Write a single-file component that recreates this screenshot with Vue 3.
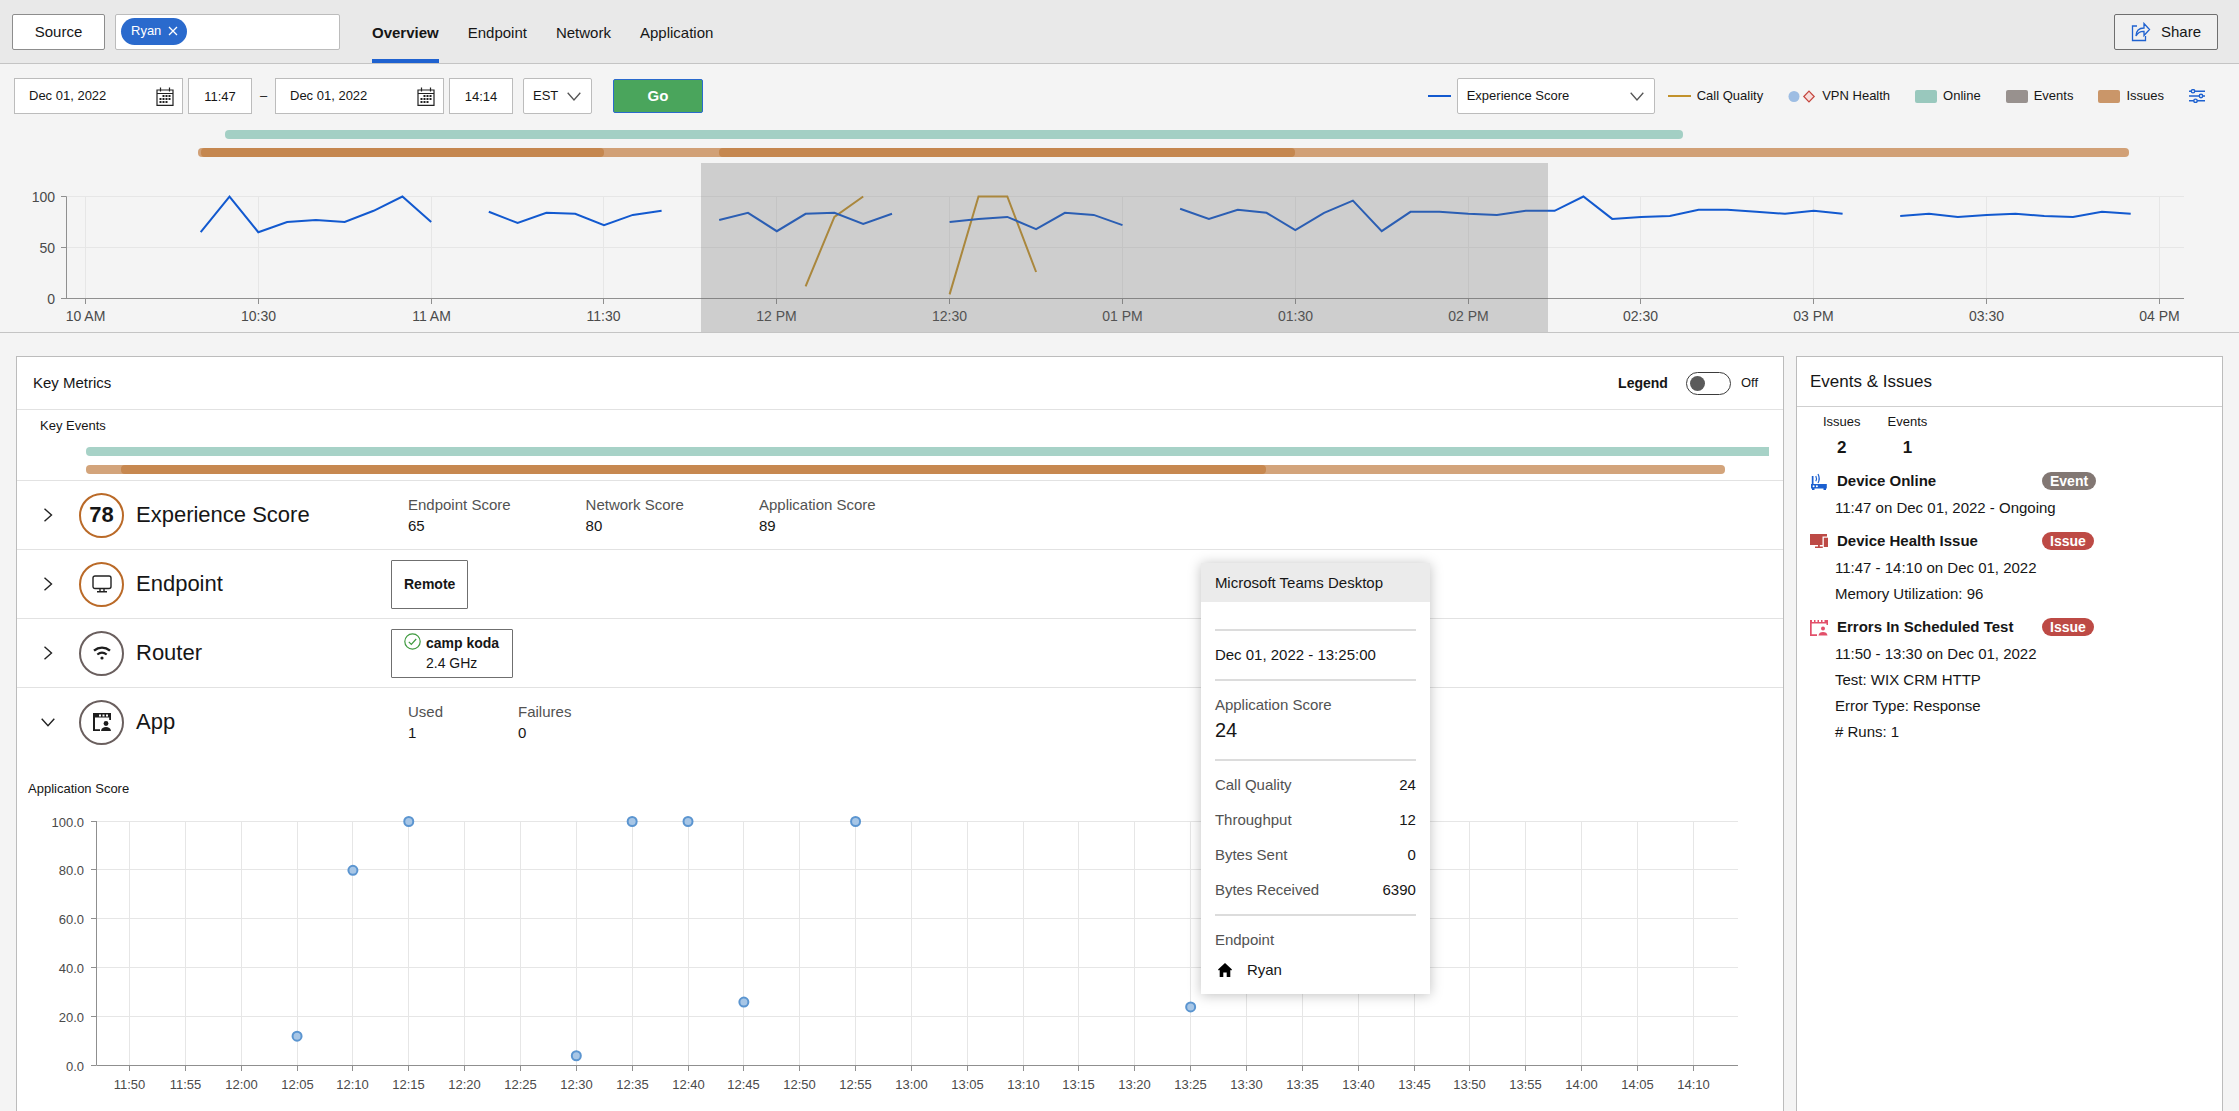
<script setup>
import { ref } from 'vue'

const tabs = ['Overview', 'Endpoint', 'Network', 'Application']
const activeTab = ref('Overview')
const search = ref('')
const startDate = ref('Dec 01, 2022')
const startTime = ref('11:47')
const endDate = ref('Dec 01, 2022')
const endTime = ref('14:14')
const zone = ref('EST')
const metric = ref('Experience Score')
const legendOn = ref(false)

// Overview timeline: minutes are counted from 10 AM
const timeX = (minute) => 85.5 + minute * 5.761
const scoreY = (value) => 178.5 - value * 1.02
const hourTicks = [
  '10 AM', '10:30', '11 AM', '11:30', '12 PM', '12:30', '01 PM',
  '01:30', '02 PM', '02:30', '03 PM', '03:30', '04 PM',
].map((label, i) => ({ label, x: Math.floor(timeX(i * 30)) + 0.5 }))

const toPoints = ({ start, values }) =>
  values.map((v, i) => `${timeX(start + i * 5).toFixed(1)},${scoreY(v).toFixed(1)}`).join(' ')

const experience = [
  { start: 20, values: [65, 100, 65, 75, 77, 75, 86, 100, 75] },
  { start: 70, values: [85, 74, 84, 83, 72, 82, 86] },
  { start: 110, values: [77, 84, 66, 83, 84, 73, 83] },
  { start: 150, values: [75, 78, 80, 68, 84, 82, 72] },
  {
    start: 190,
    values: [88, 78, 87, 84, 67, 84, 96, 66, 85, 85, 83, 82, 86, 86, 100, 78, 80, 81, 87, 87, 85, 83, 86, 83],
  },
  { start: 315, values: [81, 83, 80, 82, 83, 81, 80, 85, 83] },
].map(toPoints)

const callQuality = [
  { start: 125, values: [12, 80, 100] },
  { start: 150, values: [4, 100, 100, 26] },
].map(toPoints)

// Application score scatter: minutes are counted from 11:47
const appX = (minute) => 79 + minute * 11.17
const appY = (value) => 266.5 - value * 2.44
const appTicks = Array.from({ length: 29 }, (_, i) => {
  const total = 11 * 60 + 50 + i * 5
  const label = `${Math.floor(total / 60)}:${String(total % 60).padStart(2, '0')}`
  return { label, x: Math.floor(appX(3 + i * 5)) + 0.5 }
})
const appLevels = [100, 80, 60, 40, 20, 0]
const appPoints = [
  [18, 12], [23, 80], [28, 100], [43, 4], [48, 100], [53, 100], [58, 26], [68, 100], [98, 24],
]

const details = [
  ['Call Quality', '24'],
  ['Throughput', '12'],
  ['Bytes Sent', '0'],
  ['Bytes Received', '6390'],
]

const feed = [
  { icon: 'router', title: 'Device Online', kind: 'Event', lines: ['11:47 on Dec 01, 2022 - Ongoing'] },
  {
    icon: 'devices', title: 'Device Health Issue', kind: 'Issue',
    lines: ['11:47 - 14:10 on Dec 01, 2022', 'Memory Utilization: 96'],
  },
  {
    icon: 'test', title: 'Errors In Scheduled Test', kind: 'Issue',
    lines: ['11:50 - 13:30 on Dec 01, 2022', 'Test: WIX CRM HTTP', 'Error Type: Response', '# Runs: 1'],
  },
]
</script>

<template>
  <div class="page">
    <header class="topbar">
      <button class="source" type="button">Source</button>
      <div class="search">
        <button class="chip" type="button" aria-label="Remove Ryan">
          <span>Ryan</span>
          <svg width="10" height="10" viewBox="0 0 10 10"><path d="M1 1l8 8M9 1l-8 8" stroke="#fff" stroke-width="1.3" /></svg>
        </button>
        <input v-model="search" type="text" aria-label="Add source" />
      </div>
      <nav class="tabs">
        <a
          v-for="tab in tabs"
          :key="tab"
          href="#"
          :class="{ active: tab === activeTab }"
          @click.prevent="activeTab = tab"
        >{{ tab }}</a>
      </nav>
      <button class="share" type="button">
        <svg width="20" height="20" viewBox="0 0 20 20" fill="none" stroke="#1f62d0" stroke-width="1.3">
          <path d="M6 4H1.500v14.500h13V14" />
          <path d="M5 14c.2-5.500 2.500-8 8-8V1.500l5.500 6-5.500 6V9.300c-4-.2-6.200 1.300-8 4.700z" />
        </svg>
        <span>Share</span>
      </button>
    </header>

    <section class="overview">
      <div class="toolbar">
        <div class="date">
          <input v-model="startDate" type="text" aria-label="Start date" />
          <svg class="calendar" width="18" height="19" viewBox="0 0 18 19">
            <path d="M1 3h16v15.300H1zM1 6.500h16M4.500.5v4M13.500.5v4" fill="none" stroke="#222" stroke-width="1.200" />
            <path d="M6.500 9h8M3.500 12h11M3.500 15h8" stroke="#222" stroke-width="2" stroke-dasharray="2 1" />
          </svg>
        </div>
        <input v-model="startTime" class="time" type="text" aria-label="Start time" />
        <span class="dash">–</span>
        <div class="date">
          <input v-model="endDate" type="text" aria-label="End date" />
          <svg class="calendar" width="18" height="19" viewBox="0 0 18 19">
            <path d="M1 3h16v15.300H1zM1 6.500h16M4.500.5v4M13.500.5v4" fill="none" stroke="#222" stroke-width="1.200" />
            <path d="M6.500 9h8M3.500 12h11M3.500 15h8" stroke="#222" stroke-width="2" stroke-dasharray="2 1" />
          </svg>
        </div>
        <input v-model="endTime" class="time" type="text" aria-label="End time" />
        <div class="picker zone">
          <select v-model="zone" aria-label="Time zone"><option>EST</option></select>
          <svg width="14" height="9" viewBox="0 0 14 9"><path d="M.7.8L7 8 13.300.8" fill="none" stroke="#555" stroke-width="1.300" /></svg>
        </div>
        <button class="go" type="button">Go</button>

        <div class="legend">
          <div class="entry">
            <svg width="23" height="4" viewBox="0 0 23 4"><path d="M0 2h23" stroke="#1259cf" stroke-width="2" /></svg>
            <div class="picker metric">
              <select v-model="metric" aria-label="Metric"><option>Experience Score</option></select>
              <svg width="14" height="9" viewBox="0 0 14 9"><path d="M.7.8L7 8 13.300.8" fill="none" stroke="#555" stroke-width="1.300" /></svg>
            </div>
            <div class="entry">
              <svg width="23" height="4" viewBox="0 0 23 4"><path d="M0 2h23" stroke="#c2922b" stroke-width="2" /></svg>
              <span>Call Quality</span>
            </div>
          </div>
          <div class="entry">
            <svg width="28" height="13" viewBox="0 0 28 13">
              <circle cx="6" cy="6.500" r="5.500" fill="#9dbde3" />
              <path d="M21 1.200l5.200 5.300-5.200 5.300-5.200-5.300z" fill="#f7dcda" stroke="#c4453d" stroke-width="1.200" />
            </svg>
            <span>VPN Health</span>
          </div>
          <div class="entry"><i class="swatch online"></i><span>Online</span></div>
          <div class="entry"><i class="swatch events"></i><span>Events</span></div>
          <div class="entry"><i class="swatch issues"></i><span>Issues</span></div>
          <button class="settings" type="button" aria-label="Chart settings">
            <svg width="16" height="14" viewBox="0 0 16 14" fill="#f4f4f4" stroke="#1f62d0" stroke-width="1.400">
              <path d="M0 2.200h16M0 7h16M0 11.800h16" />
              <circle cx="4" cy="2.200" r="1.700" /><circle cx="12" cy="7" r="1.700" /><circle cx="6.500" cy="11.800" r="1.700" />
            </svg>
          </button>
        </div>
      </div>

      <svg class="chart" viewBox="0 0 2239 212" role="img" aria-label="Experience score and call quality over time">
        <rect x="225" y="10" width="1458" height="9" rx="4" fill="#a3cfc4" />
        <rect x="198" y="28" width="1931" height="9" rx="4" fill="#d1a076" />
        <rect x="201" y="28" width="403" height="9" rx="4" fill="#c5874f" />
        <rect x="719" y="28" width="576" height="9" rx="4" fill="#c5874f" />
        <g class="grid">
          <path v-for="y in [76.5, 127.5]" :key="y" :d="`M67 ${y}H2184`" />
          <path v-for="t in hourTicks" :key="t.label" :d="`M${t.x} 76V178`" />
        </g>
        <g class="axis">
          <path d="M61 76.500h5.500v102H61M61 127.500h5M66 178.500H2184" />
          <path v-for="t in hourTicks" :key="t.label" :d="`M${t.x} 179v5`" />
        </g>
        <g class="tick large">
          <text x="55" y="82" text-anchor="end">100</text>
          <text x="55" y="133" text-anchor="end">50</text>
          <text x="55" y="184" text-anchor="end">0</text>
          <text v-for="t in hourTicks" :key="t.label" :x="t.x" y="201" text-anchor="middle">{{ t.label }}</text>
        </g>
        <polyline v-for="p in callQuality" :key="p" :points="p" class="series gold" />
        <polyline v-for="p in experience" :key="p" :points="p" class="series blue" />
        <rect x="701" y="43" width="847" height="169" fill="#6a6a6a" fill-opacity="0.280" />
      </svg>
    </section>

    <main class="content">
      <section class="panel metrics">
        <div class="panel-head">
          <h2>Key Metrics</h2>
          <div class="switch">
            <label for="legend-switch">Legend</label>
            <input id="legend-switch" v-model="legendOn" type="checkbox" />
            <span>{{ legendOn ? 'On' : 'Off' }}</span>
          </div>
        </div>

        <div class="key-events">
          <h3>Key Events</h3>
          <svg class="chart" viewBox="0 0 1766 44" role="img" aria-label="Key events">
            <path d="M1752 11H73a4 4 0 0 0-4 4v1a4 4 0 0 0 4 4H1752z" fill="#a7d2c7" />
            <rect x="69" y="29" width="1639" height="9" rx="4" fill="#d3a47b" />
            <rect x="104" y="29" width="1145" height="9" rx="4" fill="#c78850" />
          </svg>
        </div>

        <div class="row">
          <button class="expand" type="button" aria-label="Expand Experience Score">
            <svg width="10" height="14" viewBox="0 0 10 14"><path d="M1.500.7L8.500 7l-7 6.300" fill="none" stroke="#222" stroke-width="1.400" /></svg>
          </button>
          <span class="ring warn">78</span>
          <h3>Experience Score</h3>
          <dl class="stats">
            <div><dt>Endpoint Score</dt><dd>65</dd></div>
            <div><dt>Network Score</dt><dd>80</dd></div>
            <div><dt>Application Score</dt><dd>89</dd></div>
          </dl>
        </div>

        <div class="row">
          <button class="expand" type="button" aria-label="Expand Endpoint">
            <svg width="10" height="14" viewBox="0 0 10 14"><path d="M1.500.7L8.500 7l-7 6.300" fill="none" stroke="#222" stroke-width="1.400" /></svg>
          </button>
          <span class="ring warn">
            <svg width="20" height="18" viewBox="0 0 20 18" fill="none" stroke="#222" stroke-width="1.400">
              <rect x="1" y="1" width="18" height="12.500" rx="2" />
              <path d="M8 13.500v3M12 13.500v3M5 16.800h10" />
            </svg>
          </span>
          <h3>Endpoint</h3>
          <button class="tag" type="button"><b>Remote</b></button>
        </div>

        <div class="row">
          <button class="expand" type="button" aria-label="Expand Router">
            <svg width="10" height="14" viewBox="0 0 10 14"><path d="M1.500.7L8.500 7l-7 6.300" fill="none" stroke="#222" stroke-width="1.400" /></svg>
          </button>
          <span class="ring">
            <svg width="18" height="14" viewBox="0 0 18 14" fill="none" stroke="#1d1d1d">
              <path d="M1 4.600c4.800-4 11.200-4 16 0" stroke-width="2.400" />
              <path d="M4.300 8.500c3-2.300 6.400-2.300 9.400 0" stroke-width="2.200" />
              <circle cx="9" cy="12" r="1.600" fill="#1d1d1d" stroke="none" />
            </svg>
          </span>
          <h3>Router</h3>
          <button class="tag network" type="button">
            <svg width="17" height="17" viewBox="0 0 17 17" fill="none" stroke="#3f9a3f" stroke-width="1.200">
              <circle cx="8.500" cy="8.500" r="7.700" />
              <path d="M4.800 8.800l2.500 2.500 4.900-5.300" />
            </svg>
            <span><b>camp koda</b><br />2.4 GHz</span>
          </button>
        </div>

        <div class="row open">
          <button class="expand" type="button" aria-label="Collapse App">
            <svg width="14" height="9" viewBox="0 0 14 9"><path d="M.7.8L7 7.800 13.300.8" fill="none" stroke="#222" stroke-width="1.400" /></svg>
          </button>
          <span class="ring">
            <svg width="20" height="20" viewBox="0 0 20 20" fill="#1d1d1d">
              <path d="M1 1h18v7h-1.800V5.500H3v11.700h5V19H1z" />
              <path d="M7 2.500h2v2H7zM10.500 2.500h2v2h-2zM14 2.500h2v2h-2z" fill="#fff" />
              <circle cx="14" cy="11.500" r="2.400" />
              <path d="M9 19c.4-3 2.400-4 5-4s4.600 1 5 4z" />
            </svg>
          </span>
          <h3>App</h3>
          <dl class="stats">
            <div><dt>Used</dt><dd>1</dd></div>
            <div><dt>Failures</dt><dd>0</dd></div>
          </dl>
        </div>

        <h4 class="chart-title">Application Score</h4>
        <svg class="chart" viewBox="0 0 1766 300" role="img" aria-label="Application score over time">
          <g class="grid">
            <path v-for="v in appLevels.slice(0, 5)" :key="v" :d="`M79 ${Math.round(appY(v)) - 0.5}H1721`" />
            <path v-for="t in appTicks" :key="t.label" :d="`M${t.x} 22V266`" />
          </g>
          <g class="axis">
            <path d="M79.500 22V266.500H1721" />
            <path v-for="v in appLevels" :key="v" :d="`M74 ${Math.round(appY(v)) - 0.5}h5`" />
            <path v-for="t in appTicks" :key="t.label" :d="`M${t.x} 267v5`" />
          </g>
          <g class="tick">
            <text v-for="v in appLevels" :key="v" x="67" :y="Math.round(appY(v)) + 5" text-anchor="end">{{ v.toFixed(1) }}</text>
            <text v-for="t in appTicks" :key="t.label" :x="t.x" y="290" text-anchor="middle">{{ t.label }}</text>
          </g>
          <circle v-for="[m, v] in appPoints" :key="m" :cx="appX(m)" :cy="appY(v)" r="4.500" class="dot" />
        </svg>

        <aside class="tooltip">
          <h4>Microsoft Teams Desktop</h4>
          <div class="tooltip-body">
            <p class="stamp">Dec 01, 2022 - 13:25:00</p>
            <div class="score"><span>Application Score</span><strong>24</strong></div>
            <dl>
              <div v-for="[name, value] in details" :key="name"><dt>{{ name }}</dt><dd>{{ value }}</dd></div>
            </dl>
            <div class="owner">
              <span>Endpoint</span>
              <p>
                <svg width="14" height="14" viewBox="0 0 14 14"><path d="M7 0l7 6.600-.8 1L12.300 7v7H8.700V9.500H5.300V14H1.700V7l-.9.600-.8-1z" /></svg>
                Ryan
              </p>
            </div>
          </div>
        </aside>
      </section>

      <section class="panel feed">
        <h2>Events &amp; Issues</h2>
        <dl class="counts">
          <div><dt>Issues</dt><dd>2</dd></div>
          <div><dt>Events</dt><dd>1</dd></div>
        </dl>
        <article v-for="item in feed" :key="item.title">
          <header>
            <svg v-if="item.icon === 'router'" width="18" height="17" viewBox="0 0 18 17" fill="#1a5fd0">
              <path d="M1.800 3h1.700v8h13.300v4.500H16V17h-2.500v-1.500h-9V17H2v-1.500H1V11h.8z" />
              <circle cx="3.600" cy="13.200" r="1" fill="#fff" />
              <circle cx="6.900" cy="13.200" r="1" fill="#fff" />
              <path d="M5.800 3c.9 1.700.9 3.600 0 5.300M8 1c1.600 3 1.600 6 0 9" fill="none" stroke="#1a5fd0" stroke-width="1.200" />
            </svg>
            <svg v-else-if="item.icon === 'devices'" width="18" height="16" viewBox="0 0 18 16" fill="#bd4a45">
              <path d="M0 1h17v2.500h-4.500V12H0z" />
              <path d="M8 12h1.800v1.500h3V15H5v-1.500h3z" />
              <path d="M13.800 4.700H18V14h-4.200z" />
            </svg>
            <svg v-else width="18" height="17" viewBox="0 0 18 17" fill="#e2506a">
              <path d="M0 1h2v2h2V1h1.500v2h2V1H9v2h2V1h1.500v2h2V1H18v5h-1.500V4.500H1.700v10.800H7V17H0z" />
              <circle cx="13" cy="9.500" r="2" />
              <path d="M8.500 16.500c.3-2.500 2-3.500 4.500-3.500s4.200 1 4.500 3.500z" />
            </svg>
            <h3>{{ item.title }}</h3>
            <span class="badge" :class="{ issue: item.kind === 'Issue' }">{{ item.kind }}</span>
          </header>
          <p v-for="line in item.lines" :key="line">{{ line }}</p>
        </article>
      </section>
    </main>
  </div>
</template>

<style>
body {
  margin: 0;
  background: #f4f4f4;
}
</style>

<style scoped>
.page,
.page * {
  box-sizing: border-box;
}
.page {
  display: flex;
  flex-direction: column;
  min-height: 100vh;
  background: #f4f4f4;
  color: #161616;
  font: 15px/20px "Liberation Sans", Arial, sans-serif;
}
button,
input,
select {
  margin: 0;
  padding: 0;
  border: 0;
  background: none;
  color: inherit;
  font: inherit;
}
h2, h3, h4, p, dl, dd {
  margin: 0;
  font-size: 15px;
  font-weight: 400;
}
svg {
  flex: none;
  display: block;
}

/* Header */
.topbar {
  display: flex;
  align-items: flex-start;
  height: 64px;
  padding: 14px 21px 0 12px;
  border-bottom: 1px solid #c4c4c4;
  background: #e9e9e9;
}
.source {
  width: 93px;
  height: 36px;
  margin-right: 10px;
  border: 1px solid #8d8d8d;
  border-radius: 2px;
  background: #fff;
}
.search {
  display: flex;
  width: 225px;
  height: 36px;
  padding: 3px 5px;
  border: 1px solid #bcbcbc;
  border-radius: 2px;
  background: #fff;
}
.search input {
  flex: 1;
  min-width: 0;
}
.chip {
  display: flex;
  align-items: center;
  gap: 7px;
  height: 27px;
  padding: 0 9px 1px 10px;
  border-radius: 14px;
  background: #2a6acd;
  color: #fff;
  font-size: 13px;
}
.tabs {
  display: flex;
  gap: 29px;
  height: 49px;
  margin-left: 32px;
}
.tabs a {
  padding-top: 9px;
  border-bottom: 4px solid transparent;
  color: inherit;
  text-decoration: none;
}
.tabs .active {
  border-color: #1f62d0;
  font-weight: 700;
}
.share {
  display: flex;
  align-items: center;
  gap: 10px;
  width: 104px;
  height: 36px;
  margin-left: auto;
  padding-left: 16px;
  border: 1px solid #6f6f6f;
  border-radius: 2px;
  background: #f0f0f0;
}

/* Time range and legend */
.overview {
  border-bottom: 1px solid #c4c4c4;
}
.toolbar {
  display: flex;
  align-items: center;
  padding: 14px 34px 6px 14px;
  font-size: 13px;
}
.date {
  display: flex;
  align-items: center;
  width: 169px;
  height: 36px;
  margin-right: 5px;
  padding: 0 8px 0 14px;
  border: 1px solid #bcbcbc;
  background: #fff;
}
.date input {
  flex: 1;
  min-width: 0;
}
.time {
  width: 64px;
  height: 36px;
  border: 1px solid #bcbcbc;
  background: #fff;
  text-align: center;
}
.dash {
  width: 23px;
  text-align: center;
}
.picker {
  display: grid;
  align-items: center;
  height: 36px;
  border: 1px solid #bcbcbc;
  border-radius: 2px;
  background: #fff;
}
.picker select,
.picker svg {
  grid-area: 1 / 1;
}
.picker select {
  width: 100%;
  height: 100%;
  padding-left: 9px;
  appearance: none;
}
.picker svg {
  justify-self: end;
  margin-right: 10px;
  pointer-events: none;
}
.zone {
  width: 69px;
  margin: 0 21px 0 10px;
}
.metric {
  width: 198px;
  margin: 0 7px 0 0;
}
.go {
  width: 90px;
  height: 34px;
  border: 1px solid #2a6acd;
  border-radius: 2px;
  background: #4aa55c;
  color: #fff;
  font-size: 15px;
  font-weight: 700;
}
.legend {
  display: flex;
  align-items: center;
  gap: 25px;
  margin-left: auto;
}
.entry {
  display: flex;
  align-items: center;
  gap: 6px;
}
.swatch {
  width: 22px;
  height: 13px;
  border-radius: 2px;
}
.online { background: #99c8bd; }
.events { background: #98918e; }
.issues { background: #ca9669; }

/* Charts */
.chart {
  width: 100%;
  height: auto;
}
.grid path { stroke: #e6e6e6; }
.axis path {
  fill: none;
  stroke: #8f8f8f;
}
.tick {
  fill: #4a4a4a;
  font-size: 13px;
}
.large { font-size: 14px; }
.series {
  fill: none;
  stroke-width: 2;
}
.blue { stroke: #1259cf; }
.gold { stroke: #c2922b; }
.dot {
  fill: #a7c6e6;
  stroke: #5b95d0;
  stroke-width: 2;
}

/* Panels */
.content {
  display: flex;
  flex: 1;
  gap: 12px;
  padding: 23px 16px 0;
}
.panel {
  border: 1px solid #bcbcbc;
  border-bottom: 0;
  background: #fff;
}
.metrics {
  position: relative;
  flex: 1;
  min-width: 0;
}
.panel-head {
  display: flex;
  align-items: center;
  justify-content: space-between;
  height: 53px;
  padding: 0 25px 0 16px;
  border-bottom: 1px solid #e2e2e2;
}
.switch {
  display: flex;
  align-items: center;
  font-size: 13px;
}
.switch label {
  font-size: 14px;
  font-weight: 700;
}
.switch input {
  width: 45px;
  height: 23px;
  margin: 0 10px 0 18px;
  padding: 3px;
  border: 1px solid #3c3c3c;
  border-radius: 12px;
  appearance: none;
}
.switch input::before {
  content: "";
  display: block;
  width: 15px;
  height: 15px;
  border-radius: 50%;
  background: #5a5a5a;
}
.switch input:checked::before { margin-left: auto; }
.key-events {
  padding-top: 6px;
  border-bottom: 1px solid #e2e2e2;
}
.key-events h3 {
  padding-left: 23px;
  font-size: 13px;
}
.row {
  display: flex;
  align-items: center;
  height: 69px;
  border-bottom: 1px solid #e2e2e2;
}
.open { border-color: transparent; }
.expand {
  display: flex;
  justify-content: center;
  align-items: center;
  width: 62px;
  height: 40px;
}
.ring {
  display: flex;
  justify-content: center;
  align-items: center;
  width: 45px;
  height: 45px;
  border: 2px solid #6a5f5e;
  border-radius: 50%;
  font-size: 22px;
  font-weight: 700;
}
.warn { border-color: #ba6a28; }
.row h3 {
  width: 267px;
  padding-left: 12px;
  font-size: 22px;
}
.stats {
  display: flex;
  gap: 75px;
  padding-left: 17px;
  line-height: 21px;
}
dt { color: #525252; }
.tag {
  height: 49px;
  padding: 0 12px;
  border: 1px solid #6f6f6f;
  border-radius: 1px;
  font-size: 14px;
  line-height: 20px;
  text-align: left;
}
.network {
  display: flex;
  gap: 5px;
  padding: 3px 13px 0 12px;
}
.chart-title {
  padding: 22px 0 0 11px;
  font-size: 13px;
}

/* Point details, floating over the panel */
.tooltip {
  position: absolute;
  top: 206px;
  left: calc(68% - 17px);
  width: 229px;
  background: #fff;
  box-shadow: 0 1px 12px rgba(0, 0, 0, 0.250);
}
.tooltip h4 {
  padding: 10px 14px 9px;
  background: #ebebeb;
}
.tooltip-body {
  padding: 27px 14px 12px;
  color: #525252;
}
.tooltip-body > * {
  border-top: 2px solid #dcdcdc;
}
.stamp {
  padding: 14px 0;
  color: #161616;
}
.score {
  display: flex;
  flex-direction: column;
  height: 80px;
  padding-top: 14px;
}
.score strong {
  color: #161616;
  font-size: 20px;
  font-weight: 400;
  line-height: 30px;
}
.tooltip dl {
  padding: 6px 0 7px;
}
.tooltip dl div {
  display: flex;
  justify-content: space-between;
  line-height: 35px;
}
.tooltip dd { color: #161616; }
.owner {
  padding-top: 14px;
}
.owner p {
  display: flex;
  align-items: center;
  gap: 15px;
  padding: 10px 0 2px 3px;
  color: #161616;
}

/* Events & issues */
.feed {
  width: 427px;
}
.feed h2 {
  padding: 15px 13px 14px;
  border-bottom: 1px solid #cfcfcf;
  font-size: 17px;
}
.counts {
  display: flex;
  gap: 27px;
  padding: 5px 0 9px 26px;
  text-align: center;
}
.counts dt {
  color: #161616;
  font-size: 13px;
}
.counts dd {
  padding-top: 6px;
  font-size: 17px;
  font-weight: 700;
}
.feed article {
  padding: 0 13px 6px;
}
.feed header {
  display: flex;
  align-items: center;
  height: 28px;
}
.feed h3 {
  width: 214px;
  padding-left: 9px;
  font-weight: 700;
}
.badge {
  height: 18px;
  padding: 0 8px;
  border-radius: 9px;
  background: #827773;
  color: #fff;
  font-size: 14px;
  font-weight: 700;
  line-height: 18px;
}
.issue { background: #bd4a45; }
.feed article p {
  padding-left: 25px;
  line-height: 26px;
}
</style>
